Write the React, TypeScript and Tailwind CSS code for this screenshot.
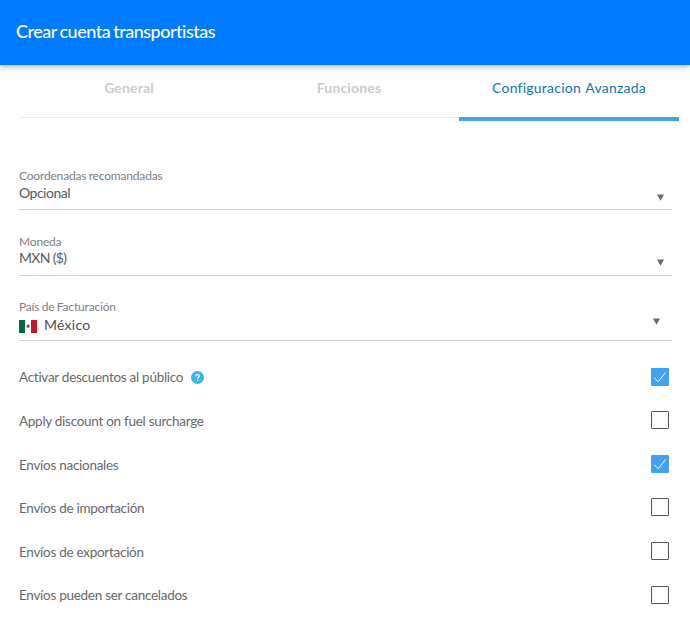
import type { ReactNode } from 'react';

interface SelectFieldProps {
    label: string;
    height: string;
    arrow: string;
    children: ReactNode;
}

interface OptionRowProps {
    label: string;
    checked: boolean;
    help?: boolean;
}

const tabs = [
    { label: 'General', active: false },
    { label: 'Funciones', active: false },
    { label: 'Configuracion Avanzada', active: true },
];

const options: OptionRowProps[] = [
    { label: 'Activar descuentos al público', checked: true, help: true },
    { label: 'Apply discount on fuel surcharge', checked: false },
    { label: 'Envíos nacionales', checked: true },
    { label: 'Envíos de importación', checked: false },
    { label: 'Envíos de exportación', checked: false },
    { label: 'Envíos pueden ser cancelados', checked: false },
];

function MexicoFlag() {
    return (
        <svg className="w-[18px] h-[13px] mt-[3px]" viewBox="0 0 18 13">
            <rect width="18" height="13" fill="#fff" />
            <rect width="6" height="13" fill="#006847" />
            <rect x="12" width="6" height="13" fill="#ce1126" />
            <path d="M7.2 6.2l1.6-2.2 2 1.2-.2 2.2-1.6.9-1.5-1z" fill="#a08a68" />
            <path d="M8.5 5h1.6v1.8H8.5z" fill="#5b4a2c" />
        </svg>
    );
}

function SelectField({ label, height, arrow, children }: SelectFieldProps) {
    return (
        <div className={`relative flex flex-col justify-end border-b border-[#ced4da] ${height}`}>
            <span className="text-xs leading-4 tracking-[-0.18px] [word-spacing:-0.5px] text-[#808080]">{label}</span>
            {children}
            <svg className={`absolute w-[7px] h-[7px] ${arrow}`} viewBox="0 0 7 7">
                <path d="M0 0.5h7L3.5 6.8z" fill="#6b6b6b" />
            </svg>
        </div>
    );
}

function OptionRow({ label, checked, help }: OptionRowProps) {
    return (
        <label className="flex items-start justify-between h-[43.6px] pr-[3px]">
            <span className="flex items-center h-[19px] mt-[0.5px] text-[13.5px] tracking-[-0.28px] text-[#686868]">
                {label}
                {help && (
                    <svg className="w-[13px] h-[13px] ml-2" viewBox="0 0 13 13">
                        <circle cx="6.5" cy="6.5" r="6.5" fill="#35b5e9" />
                        <path
                            d="M4.9 5.2c0-2.1 3.3-2 3.3-.1 0 1.3-1.6 1.2-1.6 2.4"
                            fill="none"
                            stroke="#fff"
                            strokeWidth="1.4"
                        />
                        <circle cx="6.6" cy="9.2" r="0.8" fill="#fff" />
                    </svg>
                )}
            </span>
            {checked ? (
                <span className="w-[18px] h-[18px] rounded-[1px] bg-[#3fa2f7]">
                    <svg viewBox="0 0 18 18" fill="none" stroke="#fff" strokeWidth="1">
                        <path d="M3 9.7l4.3 4L14.6 4.4" />
                    </svg>
                </span>
            ) : (
                <span className="w-[18px] h-[18px] rounded-[1px] border border-[#555]" />
            )}
        </label>
    );
}

export default function App() {
    return (
        <div className="w-full h-[621px] overflow-hidden bg-white font-['Lato',sans-serif]">
            <header className="flex items-center h-[65px] px-4 pb-1 bg-[#007bff] shadow-[0_2px_5px_rgba(0,0,0,0.28)]">
                <h1 className="text-lg font-medium tracking-[-0.5px] [word-spacing:-1px] text-white">
                    Crear cuenta transportistas
                </h1>
            </header>

            <nav className="flex pl-[19px] h-[56px]">
                {tabs.map(tab => (
                    <div
                        key={tab.label}
                        className={
                            tab.active
                                ? 'w-[220px] h-[56px] pt-[13px] text-center text-sm tracking-[0.23px] [word-spacing:1px] text-[#0b76b0] border-b-4 border-[#3fa2f7]'
                                : 'w-[220px] h-[53px] pt-[13px] text-center text-sm font-bold tracking-[0.15px] text-[#cccccc] border-b border-[#e9ecef]'
                        }
                    >
                        {tab.label}
                    </div>
                ))}
            </nav>

            <main className="pt-[23px] pl-[19px] pr-[18px]">
                <SelectField label="Coordenadas recomandadas" height="h-[66px]" arrow="right-[8px] bottom-[8px]">
                    <span className="pb-[7px] text-sm leading-[18px] tracking-[-0.5px] text-[#555b61]">Opcional</span>
                </SelectField>
                <SelectField label="Moneda" height="h-[66px]" arrow="right-[8px] bottom-[9px]">
                    <span className="pb-[9px] text-sm leading-4 tracking-[-0.65px] text-[#555b61]">MXN ($)</span>
                </SelectField>
                <SelectField label="País de Facturación" height="h-[65px]" arrow="right-[12px] bottom-[15px]">
                    <span className="flex items-center gap-[7px] pb-[5px] text-sm leading-5 tracking-[0.25px] text-[#505050]">
                        <MexicoFlag />
                        México
                    </span>
                </SelectField>

                <div className="pt-[26.6px]">
                    {options.map(option => (
                        <OptionRow key={option.label} {...option} />
                    ))}
                </div>
            </main>
        </div>
    );
}
